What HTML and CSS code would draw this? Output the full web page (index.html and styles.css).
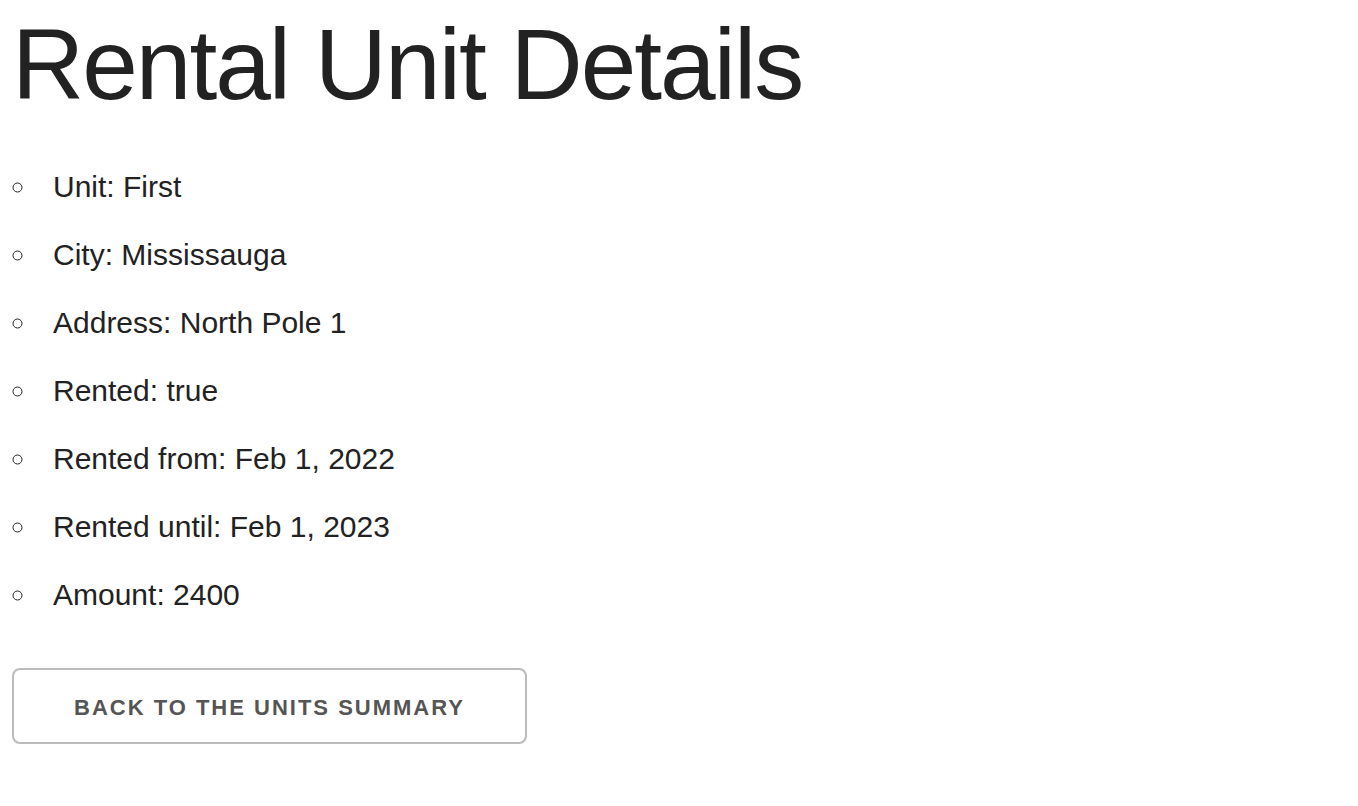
FILE: index.html
```html
<!DOCTYPE html>
<html lang="en">
<head>
<meta charset="utf-8">
<title>Rental Unit Details</title>
<link rel="stylesheet" href="styles.css">
</head>
<body>
<div class="page">
  <h1 class="title">Rental Unit Details</h1>
  <ul class="details">
    <li>Unit: First</li>
    <li>City: Mississauga</li>
    <li>Address: North Pole 1</li>
    <li>Rented: true</li>
    <li>Rented from: Feb 1, 2022</li>
    <li>Rented until: Feb 1, 2023</li>
    <li>Amount: 2400</li>
  </ul>
  <a class="button" href="#">Back to the units summary</a>
</div>
</body>
</html>
```

FILE: styles.css
```css
html, body {
  margin: 0;
  padding: 0;
  background: #fff;
}
body {
  font-family: "Liberation Sans", Arial, Helvetica, sans-serif;
  color: #222;
  font-size: 30px;
  line-height: 1.6;
}
.page {
  padding: 0 12px;
}
.title {
  margin: 4px 0 39px;
  font-size: 100px;
  font-weight: 400;
  line-height: 1.2;
  letter-spacing: -2px;
  color: #222;
}
.details {
  list-style: circle inside;
  margin: 0 0 49px;
  padding: 0 0 0 1px;
}
.details li {
  margin-bottom: 20px;
}
.button {
  display: inline-block;
  box-sizing: border-box;
  height: 76px;
  padding: 0 60px;
  line-height: 76px;
  font-size: 22px;
  font-weight: 700;
  letter-spacing: 2px;
  text-transform: uppercase;
  text-decoration: none;
  color: #555;
  border: 2px solid #bbb;
  border-radius: 8px;
  background: transparent;
  white-space: nowrap;
}
```
